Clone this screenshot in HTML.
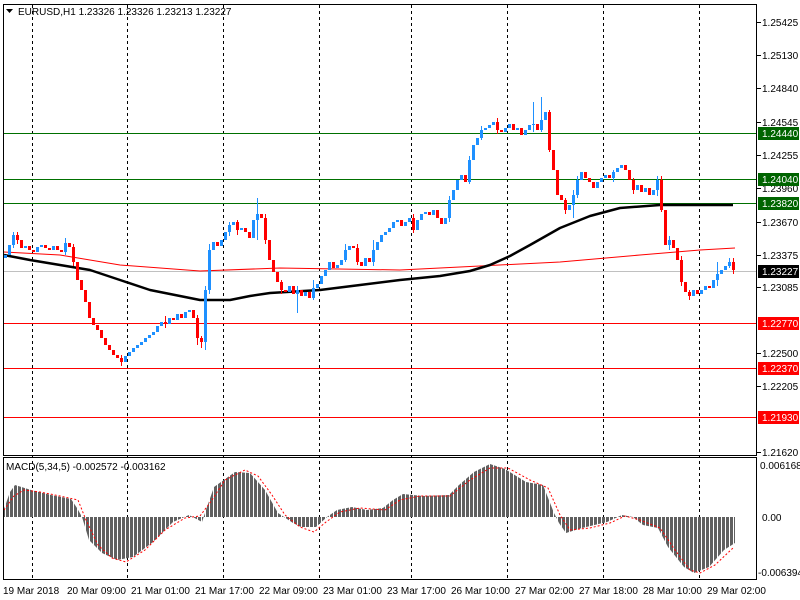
<!DOCTYPE html>
<html><head><meta charset="utf-8"><style>
html,body{margin:0;padding:0;background:#fff;width:800px;height:600px;overflow:hidden}
svg{display:block;font-family:"Liberation Sans",sans-serif;font-size:10px}
</style></head><body>
<svg width="800" height="600" viewBox="0 0 800 600" xmlns="http://www.w3.org/2000/svg">
<defs><pattern id="hb" patternUnits="userSpaceOnUse" x="2" y="0" width="4" height="10"><rect x="0" y="0" width="3" height="10" fill="#606060"/></pattern></defs>
<rect width="800" height="600" fill="#fff"/>
<g stroke="#000" stroke-dasharray="3,3">
<line x1="32.5" y1="5" x2="32.5" y2="580"/><line x1="127.5" y1="5" x2="127.5" y2="580"/><line x1="223.5" y1="5" x2="223.5" y2="580"/><line x1="319.5" y1="5" x2="319.5" y2="580"/><line x1="411.5" y1="5" x2="411.5" y2="580"/><line x1="507.5" y1="5" x2="507.5" y2="580"/><line x1="603.5" y1="5" x2="603.5" y2="580"/><line x1="699.5" y1="5" x2="699.5" y2="580"/>
</g>
<g stroke-width="1">
<line x1="4" y1="133.5" x2="757" y2="133.5" stroke="#007000"/><line x1="4" y1="179.5" x2="757" y2="179.5" stroke="#007000"/><line x1="4" y1="203.5" x2="757" y2="203.5" stroke="#007000"/>
<line x1="4" y1="323.5" x2="757" y2="323.5" stroke="#f00"/><line x1="4" y1="368.5" x2="757" y2="368.5" stroke="#f00"/><line x1="4" y1="417.5" x2="757" y2="417.5" stroke="#f00"/>
<line x1="4" y1="271.5" x2="757" y2="271.5" stroke="#c0c0c0"/>
</g>
<polyline points="4,252 60,255 120,265 200,271 280,268 400,270 480,266 560,262 640,255 700,250 735,248" fill="none" stroke="#f00"/>
<polyline points="4,255 30,260 60,265 90,270 120,280 150,290 180,296 200,300 230,300 250,296 270,293 320,290 360,285 400,280 440,276 470,271 490,265 510,256 530,245 560,228 590,216 620,208 660,205 733,205" fill="none" stroke="#000" stroke-width="2.5" stroke-linejoin="round"/>
<path stroke="#1e90ff" stroke-width="1" fill="none" d="M13.5,232V248M65.5,238V255M205.5,350V286M209.5,294V244M229.5,222V236M257.5,198V240M297.5,286V313M313.5,280V300M345.5,244V262M373.5,240V266M449.5,196V222M469.5,156V184M481.5,126V140M541.5,97V132M533.5,102V132M573.5,190V218M577.5,176V198M613.5,170V182M657.5,176V196M669.5,236V250M717.5,262V286M729.5,258V268"/>
<path stroke="#f00" stroke-width="1" fill="none" d="M17.5,232V244M73.5,244V266M121.5,355V366M165.5,316V328M197.5,315V345M201.5,336V348M237.5,220V235M265.5,214V244M281.5,280V294M357.5,244V265M413.5,214V233M497.5,118V134M549.5,110V152M565.5,198V214M633.5,178V194M661.5,176V212M681.5,256V286M689.5,290V300M733.5,258V274"/>
<path stroke="#1e90ff" stroke-width="3" fill="none" d="M5.5,258V255M9.5,255V245M13.5,245V235M25.5,248V246M37.5,252V247M41.5,247V245M53.5,250V246M65.5,252V243M125.5,362V356M129.5,356V352M133.5,352V348M137.5,348V345M141.5,345V342M145.5,342V338M149.5,338V335M153.5,335V332M157.5,332V326M161.5,326V322M169.5,324V318M177.5,320V314M185.5,318V312M189.5,312V310M205.5,342V290M209.5,290V250M213.5,250V242M221.5,246V240M225.5,240V232M229.5,232V225M233.5,225V222M241.5,230V228M253.5,238V220M257.5,220V214M289.5,292V286M297.5,294V290M305.5,296V292M313.5,298V288M317.5,288V284M321.5,284V276M325.5,276V270M329.5,270V262M337.5,268V265M341.5,265V260M345.5,260V250M349.5,250V246M365.5,266V258M373.5,262V250M377.5,250V242M381.5,242V235M385.5,235V232M389.5,232V228M393.5,228V222M397.5,222V220M405.5,226V222M409.5,222V218M417.5,230V220M421.5,220V214M425.5,214V212M433.5,215V210M445.5,224V218M449.5,218V200M453.5,200V190M457.5,190V180M461.5,180V175M469.5,182V160M473.5,160V145M477.5,145V138M481.5,138V130M485.5,130V128M489.5,128V125M493.5,125V122M505.5,132V128M509.5,128V124M517.5,130V128M525.5,135V130M529.5,130V125M533.5,125V124M541.5,130V120M545.5,120V112M569.5,210V205M573.5,205V195M577.5,195V180M581.5,180V172M597.5,188V182M601.5,182V178M605.5,178V175M613.5,178V172M617.5,172V168M621.5,168V165M637.5,190V185M645.5,192V188M653.5,195V190M657.5,190V180M669.5,245V240M693.5,296V290M701.5,294V290M705.5,290V286M713.5,288V280M717.5,280V274M721.5,274V270M725.5,270V266M729.5,266V262"/>
<path stroke="#f00" stroke-width="3" fill="none" d="M17.5,235V240M21.5,240V248M29.5,246V250M33.5,250V252M45.5,245V248M49.5,248V250M57.5,246V250M61.5,250V252M69.5,243V247M73.5,247V262M77.5,262V280M81.5,280V290M85.5,290V302M89.5,302V318M93.5,318V325M97.5,325V330M101.5,330V338M105.5,338V345M109.5,345V350M113.5,350V355M117.5,355V358M121.5,358V362M165.5,322V324M173.5,318V320M181.5,314V318M193.5,310V318M197.5,318V338M201.5,338V342M217.5,242V246M237.5,222V230M245.5,228V232M249.5,232V238M261.5,214V218M265.5,218V240M269.5,240V260M273.5,260V272M277.5,272V282M281.5,282V290M285.5,290V292M293.5,286V294M301.5,290V296M309.5,292V298M333.5,262V268M353.5,246V248M357.5,248V262M361.5,262V266M369.5,258V262M401.5,220V226M413.5,218V230M429.5,212V215M437.5,210V218M441.5,218V224M465.5,175V182M497.5,122V130M501.5,130V132M513.5,124V130M521.5,128V135M537.5,124V130M549.5,112V150M553.5,150V170M557.5,170V195M561.5,195V200M565.5,200V210M585.5,172V178M589.5,178V182M593.5,182V188M609.5,175V178M625.5,165V170M629.5,170V180M633.5,180V190M641.5,185V192M649.5,188V195M661.5,180V210M665.5,210V245M673.5,240V248M677.5,248V260M681.5,260V282M685.5,282V292M689.5,292V296M697.5,290V294M709.5,286V288M733.5,262V270"/>
<polygon fill="url(#hb)" points="3,517 3,512 10,492 15,485 31,490 51,495 71,499 77,508 82,517 89,540 102,553 117,560 133,557 153,542 173,522 189,515 202,522 207,507 214,487 235,472 250,473 265,490 278,513 293,523 301,527 316,527 327,517 337,510 352,507 367,510 383,508 393,500 403,494 423,496 449,495 459,485 474,472 490,464 505,469 526,482 543,485 554,513 559,523 566,533 582,528 607,522 622,515 633,517 643,525 658,528 668,547 684,567 694,573 709,567 724,550 735,543 735,517"/>
<polyline fill="none" stroke="#f00" stroke-dasharray="2,2" points="4,510 14,496 24,490 40,492 60,496 78,500 86,520 98,545 112,558 126,562 145,550 165,530 185,518 200,516 212,500 225,480 245,470 258,476 272,495 285,515 300,527 314,532 326,522 340,512 360,508 385,510 400,500 420,496 450,496 470,480 490,468 508,468 530,480 548,488 560,515 570,530 590,528 610,523 625,516 640,520 660,528 675,550 690,570 700,573 715,565 733,548"/>
<rect x="3.5" y="4.5" width="753" height="451" fill="none" stroke="#000"/>
<rect x="3.5" y="457.5" width="753" height="122" fill="none" stroke="#000"/>
<g stroke="#000">
<line x1="757" y1="22.5" x2="761" y2="22.5"/><line x1="757" y1="55.5" x2="761" y2="55.5"/><line x1="757" y1="88.5" x2="761" y2="88.5"/><line x1="757" y1="122.5" x2="761" y2="122.5"/><line x1="757" y1="155.5" x2="761" y2="155.5"/><line x1="757" y1="188.5" x2="761" y2="188.5"/><line x1="757" y1="222.5" x2="761" y2="222.5"/><line x1="757" y1="255.5" x2="761" y2="255.5"/><line x1="757" y1="287.5" x2="761" y2="287.5"/><line x1="757" y1="353.5" x2="761" y2="353.5"/><line x1="757" y1="386.5" x2="761" y2="386.5"/><line x1="757" y1="452.5" x2="761" y2="452.5"/>
</g>
<g fill="#000">
<text x="762" y="26">1.25425</text><text x="762" y="59">1.25130</text><text x="762" y="92">1.24840</text><text x="762" y="126">1.24545</text><text x="762" y="159">1.24255</text><text x="762" y="192">1.23960</text><text x="762" y="226">1.23670</text><text x="762" y="259">1.23375</text><text x="762" y="291">1.23085</text><text x="762" y="357">1.22500</text><text x="762" y="390">1.22205</text><text x="762" y="456">1.21620</text>
<text x="760" y="469">0.006168</text><text x="762" y="521">0.00</text><text x="758" y="576">-0.006394</text>
</g>
<rect x="758" y="127" width="41" height="13" fill="#006400"/><rect x="758" y="173" width="41" height="13" fill="#006400"/><rect x="758" y="197" width="41" height="13" fill="#006400"/>
<rect x="758" y="265" width="41" height="13" fill="#000"/>
<rect x="758" y="317" width="41" height="13" fill="#f00"/><rect x="758" y="362" width="41" height="13" fill="#f00"/><rect x="758" y="411" width="41" height="13" fill="#f00"/>
<g fill="#fff">
<text x="762" y="137">1.24440</text><text x="762" y="183">1.24040</text><text x="762" y="207">1.23820</text><text x="762" y="275">1.23227</text><text x="762" y="327">1.22770</text><text x="762" y="372">1.22370</text><text x="762" y="421">1.21930</text>
</g>
<polygon points="6,9 13,9 9.5,13" fill="#000"/>
<text x="18" y="15" fill="#000">EURUSD,H1  1.23326 1.23326 1.23213 1.23227</text>
<text x="6" y="470" fill="#000">MACD(5,34,5) -0.002572 -0.003162</text>
<g fill="#000">
<text x="3" y="594">19 Mar 2018</text><text x="67" y="594">20 Mar 09:00</text><text x="131" y="594">21 Mar 01:00</text><text x="195" y="594">21 Mar 17:00</text><text x="259" y="594">22 Mar 09:00</text><text x="323" y="594">23 Mar 01:00</text><text x="387" y="594">23 Mar 17:00</text><text x="451" y="594">26 Mar 10:00</text><text x="515" y="594">27 Mar 02:00</text><text x="579" y="594">27 Mar 18:00</text><text x="643" y="594">28 Mar 10:00</text><text x="707" y="594">29 Mar 02:00</text>
</g>
</svg>
</body></html>
